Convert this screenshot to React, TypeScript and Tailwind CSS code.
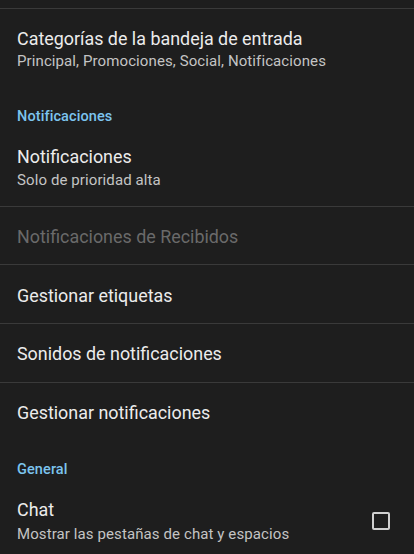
import React from "react";

const Divider = () => <div className="h-px bg-[#3a3a3a]" />;

export default function App() {
  return (
    <div
      className="w-full h-[554px] overflow-hidden bg-[#1e1e1e] text-[#e8e8e8]"
      style={{ fontFamily: "Roboto, 'Noto Sans', sans-serif" }}
    >
      <div className="h-2" />
      <Divider />
      <div className="px-[17px] pt-[18px]">
        <div className="text-[17.9px] leading-6 text-[#ececec]">Categorías de la bandeja de entrada</div>
        <div className="text-[15px] leading-5 tracking-[0.1px] text-[#c4c4c4]">Principal, Promociones, Social, Notificaciones</div>
      </div>
      <div className="px-[17px] pt-[36px] pb-[18px]">
        <div className="text-[14.5px] leading-5 font-medium tracking-[0.1px] text-[#7cc4ee]">Notificaciones</div>
      </div>
      <div className="px-[17px] pb-[16px]">
        <div className="text-[17.9px] leading-6 text-[#ececec]">Notificaciones</div>
        <div className="text-[15px] leading-5 tracking-[0.1px] mt-px text-[#c4c4c4]">Solo de prioridad alta</div>
      </div>
      <Divider />
      <div className="h-[57px] px-[17px] flex items-center pt-[4px] text-[17.9px] text-[#6a6a6a]">
        Notificaciones de Recibidos
      </div>
      <Divider />
      <div className="h-[58px] px-[17px] flex items-center pt-[4px] text-[17.9px] text-[#ececec]">
        Gestionar etiquetas
      </div>
      <Divider />
      <div className="h-[58px] px-[17px] flex items-center pt-[3px] text-[17.9px] text-[#ececec]">
        Sonidos de notificaciones
      </div>
      <Divider />
      <div className="h-[58px] px-[17px] flex items-center pt-[3px] text-[17.9px] text-[#ececec]">
        Gestionar notificaciones
      </div>
      <div className="px-[17px] pt-[19px] pb-[18px]">
        <div className="text-[14.5px] leading-5 font-medium tracking-[0.1px] text-[#7cc4ee]">General</div>
      </div>
      <div className="px-[17px] flex items-center">
        <div className="flex-1">
          <div className="text-[17.9px] leading-6 text-[#ececec]">Chat</div>
          <div className="text-[15px] leading-5 tracking-[0.1px] mt-[2px] text-[#c4c4c4]">Mostrar las pestañas de chat y espacios</div>
        </div>
        <div className="w-[18px] h-[18px] border-2 border-[#d0d0d0] rounded-[2px] mr-[7px]" />
      </div>
    </div>
  );
}
